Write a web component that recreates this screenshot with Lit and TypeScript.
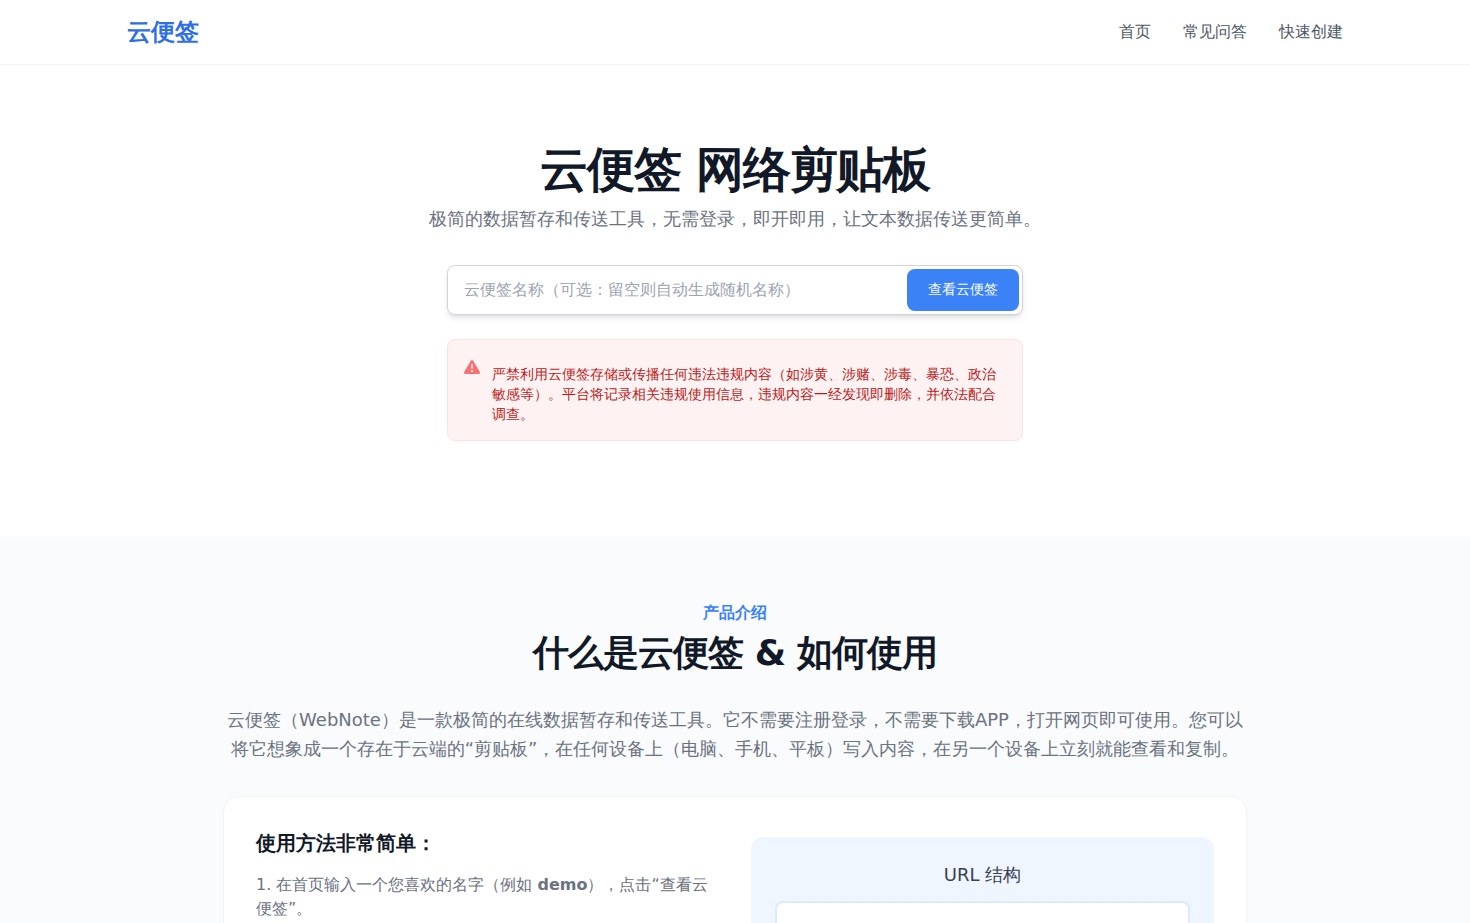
import { LitElement, html, css } from "lit";
import { customElement } from "lit/decorators.js";

@customElement("app-root")
export class AppRoot extends LitElement {
  static styles = css`
    :host {
      display: block;
      height: 100vh;
      overflow: hidden;
      background: #fff;
      font-family: "DejaVu Sans", sans-serif;
      color: #111827;
    }
    * { box-sizing: border-box; }
    .header { height: 65px; border-bottom: 1px solid #f3f4f6; background: #fff; }
    .header-inner {
      max-width: 1280px; height: 64px; margin: 0 auto; padding: 0 32px;
      display: flex; align-items: center; justify-content: space-between;
    }
    .logo { font-size: 24px; font-weight: 700; color: #2f6fe4; line-height: 32px; }
    .nav { display: flex; gap: 32px; font-size: 16px; line-height: 24px; color: #4b5563; }
    .hero { height: 472px; padding-top: 80px; display: flex; flex-direction: column; align-items: center; }
    h1 { margin: 0; font-size: 48px; line-height: 48px; font-weight: 700; letter-spacing: -1.2px; color: #111827; }
    .sub { margin: 12px 0 0; font-size: 18px; line-height: 28px; color: #6b7280; }
    .search {
      width: 576px; height: 50px; margin-top: 32px; padding: 3px;
      display: flex; align-items: center; justify-content: space-between;
      background: #fff; border: 1px solid #d1d5db; border-radius: 8px;
      box-shadow: 0 4px 6px -1px rgba(0,0,0,.1), 0 2px 4px -2px rgba(0,0,0,.1);
    }
    .ph { padding-left: 13px; font-size: 16px; color: #9ca3af; }
    .btn {
      width: 112px; height: 42px; display: flex; align-items: center; justify-content: center;
      background: #3b82f6; color: #fff; font-size: 14px; border-radius: 8px;
    }
    .alert {
      width: 576px; margin-top: 24px; padding: 16px; display: flex; gap: 12px;
      background: #fef2f2; border: 1px solid #fee2e2; border-radius: 8px;
    }
    .alert svg { flex: none; width: 16px; height: 16px; margin-top: 3px; color: #f87171; }
    .alert p { margin: 8px 0 0; font-size: 14px; line-height: 20px; color: #b91c1c; }
    .section { background: #f9fbfd; padding-top: 64px; height: 386px; }
    .wrap { width: 1024px; margin: 0 auto; }
    .eyebrow { text-align: center; font-size: 16px; line-height: 24px; font-weight: 600; color: #3b82f6; }
    h2 { margin: 8px 0 0; text-align: center; font-size: 36px; line-height: 40px; font-weight: 700; letter-spacing: -0.9px; color: #111827; }
    .intro { margin: 32px 0 0; text-align: center; font-size: 18px; line-height: 29.25px; color: #6b7280; }
    .card {
      margin-top: 32px; padding: 32px; height: 300px; background: #fff;
      border: 1px solid #f3f4f6; border-radius: 16px;
      display: grid; grid-template-columns: 1fr 1fr; gap: 32px;
      box-shadow: 0 1px 2px rgba(0,0,0,.03);
    }
    h3 { margin: 0; font-size: 20px; line-height: 28px; font-weight: 600; color: #111827; }
    .step { margin: 16px 0 0; font-size: 16px; line-height: 24px; color: #6b7280; }
    .step b { font-weight: 700; color: #6b7280; }
    .url { margin-top: 8px; padding: 24px; height: 260px; background: #eff6ff; border-radius: 12px; }
    .url-title { text-align: center; font-size: 18px; line-height: 28px; color: #374151; }
    .url-box { margin-top: 12px; height: 120px; background: #fff; border: 2px solid #dbeafe; border-radius: 8px; }
  `;

  render() {
    return html`
      <header class="header">
        <div class="header-inner">
          <div class="logo">云便签</div>
          <nav class="nav"><span>首页</span><span>常见问答</span><span>快速创建</span></nav>
        </div>
      </header>
      <section class="hero">
        <h1>云便签 网络剪贴板</h1>
        <p class="sub">极简的数据暂存和传送工具，无需登录，即开即用，让文本数据传送更简单。</p>
        <div class="search">
          <span class="ph">云便签名称（可选：留空则自动生成随机名称）</span>
          <span class="btn">查看云便签</span>
        </div>
        <div class="alert">
          <svg viewBox="0 0 512 512" fill="currentColor"><path d="M256 32c14.2 0 27.3 7.5 34.5 19.8l216 368c7.3 12.4 7.3 27.7 .2 40.1S486.3 480 472 480H40c-14.3 0-27.6-7.7-34.7-20.1s-7-27.8 .2-40.1l216-368C228.7 39.500 241.800 32 256 32zm0 128c-13.300 0-24 10.700-24 24V296c0 13.300 10.700 24 24 24s24-10.700 24-24V184c0-13.300-10.700-24-24-24zm32 224a32 32 0 1 0-64 0 32 32 0 1 0 64 0z"/></svg>
          <p>严禁利用云便签存储或传播任何违法违规内容（如涉黄、涉赌、涉毒、暴恐、政治敏感等）。平台将记录相关违规使用信息，违规内容一经发现即删除，并依法配合调查。</p>
        </div>
      </section>
      <section class="section">
        <div class="wrap">
          <div class="eyebrow">产品介绍</div>
          <h2>什么是云便签 &amp; 如何使用</h2>
          <p class="intro">云便签（WebNote）是一款极简的在线数据暂存和传送工具。它不需要注册登录，不需要下载APP，打开网页即可使用。您可以将它想象成一个存在于云端的“剪贴板”，在任何设备上（电脑、手机、平板）写入内容，在另一个设备上立刻就能查看和复制。</p>
          <div class="card">
            <div>
              <h3>使用方法非常简单：</h3>
              <p class="step">1. 在首页输入一个您喜欢的名字（例如 <b>demo</b>），点击“查看云便签”。</p>
            </div>
            <div class="url">
              <div class="url-title">URL 结构</div>
              <div class="url-box"></div>
            </div>
          </div>
        </div>
      </section>
    `;
  }
}
